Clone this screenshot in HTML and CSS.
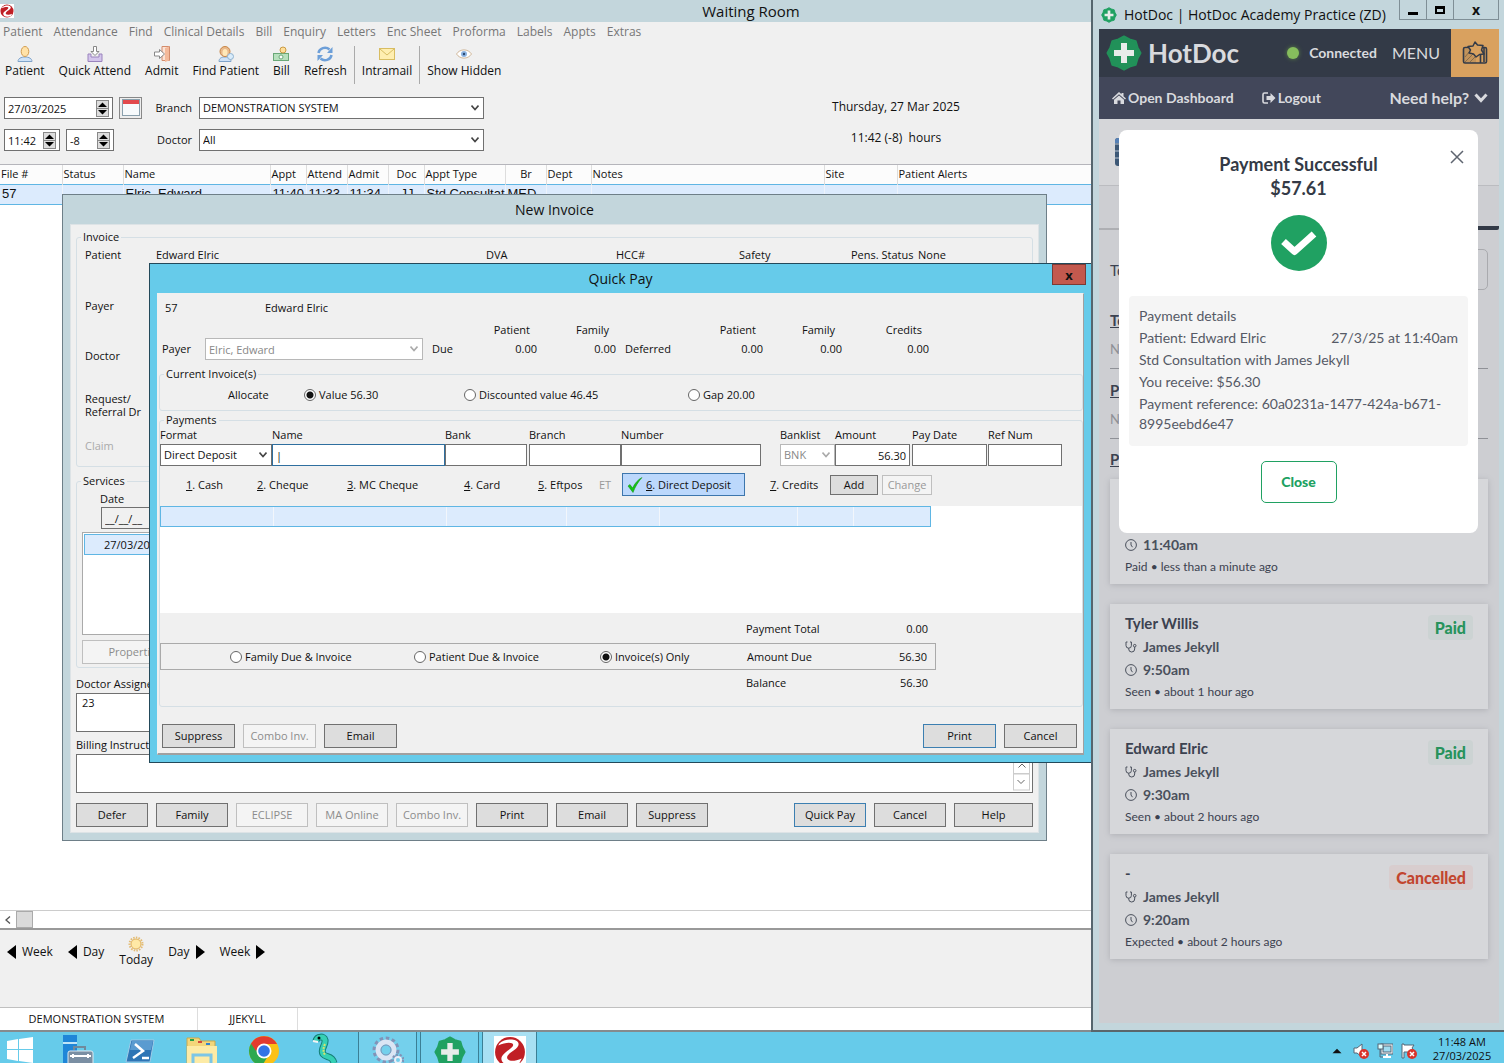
FILE: index.html
```
<!DOCTYPE html>
<html lang="en">
<head>
  <meta charset="UTF-8" />
  <title>Waiting Room</title>
  <link rel="stylesheet" href="styles.css">
</head>
<body>
  <!-- shared shapes -->
  <svg class="defs" aria-hidden="true">
    <symbol id="badge" viewBox="0 0 36 36">
      <path d="M18 1.500L23.600 4.500L29.700 6.300L31.500 12.400L34.500 18L31.500 23.600L29.700 29.700L23.600 31.500L18 34.500L12.400 31.500L6.300 29.700L4.500 23.600L1.500 18L4.500 12.400L6.300 6.300L12.400 4.500Z" fill="currentColor" stroke="currentColor" stroke-width="2" stroke-linejoin="round"/>
      <path d="M15 8h6v7h7v6h-7v7h-6v-7H8v-6h7z" fill="#e8ecea"/>
    </symbol>
    <symbol id="zed" viewBox="0 0 30 30">
      <rect width="30" height="30" fill="#fff"/>
      <circle cx="15" cy="15" r="14" fill="#c01f25"/>
      <path d="M5 7C10 2 22 2 23 7C24 12 14 15 12.500 19C11 23 17 25 26 21L24 25C18 29 8 28 7 22C6 16 18 12 18 8.500C18 5.500 11 5.500 4 9Z" fill="#fff"/>
    </symbol>
    <symbol id="steth" viewBox="0 0 12 12">
      <path d="M2.500 1H1v3.500a2.700 2.700 0 0 0 5.400 0V1H5 M3.700 7.200V8a3 3 0 0 0 6 0V6" fill="none" stroke="currentColor"/>
      <circle cx="9.700" cy="4.700" r="1.300" fill="none" stroke="currentColor"/>
    </symbol>
    <symbol id="clock" viewBox="0 0 12 12">
      <circle cx="6" cy="6" r="5.400" fill="none" stroke="currentColor"/>
      <path d="M6 3v3l1.500 2.200" fill="none" stroke="currentColor"/>
    </symbol>
  </svg>

  <main class="desktop">
    <section class="room">
      <header class="room-title">
        <svg class="room-logo"><use href="#zed"/></svg>
        <h1>Waiting Room</h1>
      </header>

      <nav class="menu">
        <button>Patient</button><button>Attendance</button><button>Find</button><button>Clinical Details</button><button>Bill</button><button>Enquiry</button><button>Letters</button><button>Enc Sheet</button><button>Proforma</button><button>Labels</button><button>Appts</button><button>Extras</button>
      </nav>

      <div class="toolbar">
        <button>
          <svg viewBox="0 0 16 16"><path d="M1 15.500c0-3 3-4.500 7-4.500s7 1.500 7 4.500z" fill="#cfe2f7" stroke="#7fa3c9"/><ellipse cx="8" cy="5.500" rx="3.800" ry="5" fill="#ffe2a8" stroke="#d19b4e"/></svg>
          Patient
        </button>
        <button>
          <svg viewBox="0 0 16 16"><path d="M1 8h3v3h8V8h3v7.500H1z" fill="#d4c5ec" stroke="#9a84bd"/><path d="M6.500 .5h3v5H12L8 9.500 4 5.500h2.500z" fill="#fff" stroke="#888"/></svg>
          Quick Attend
        </button>
        <button>
          <svg viewBox="0 0 16 16"><path d="M8 .5h7.500v14H8z" fill="#fbe3d6" stroke="#d38b6b"/><path d="M11 2l4-1.500v14L11 16z" fill="#f4b99a"/><path d="M.5 6h5V3.500l5 4.500-5 4.500V10h-5z" fill="#fff" stroke="#888"/></svg>
          Admit
        </button>
        <button>
          <svg viewBox="0 0 16 16"><path d="M1 15.500c0-3 2-4.500 6-4.500s6 1.500 6 4.500z" fill="#cfe2f7" stroke="#7fa3c9"/><ellipse cx="7" cy="5.500" rx="5" ry="5" fill="#e9b98c" stroke="#c78545"/><ellipse cx="7" cy="6.500" rx="2.500" ry="3.500" fill="#ffe8b8"/><circle cx="12.500" cy="10.500" r="3" fill="#d9ecfb" stroke="#8fb1cf"/></svg>
          Find Patient
        </button>
        <button>
          <svg viewBox="0 0 16 16"><rect x=".5" y="7.500" width="15" height="7" fill="#b7e0bd" stroke="#6aa877"/><circle cx="8" cy="11" r="2" fill="#fff" stroke="#6aa877"/><circle cx="10" cy="4" r="3" fill="#ffdf9a" stroke="#c99b45"/></svg>
          Bill
        </button>
        <button>
          <svg viewBox="0 0 16 16"><path d="M1.500 7a6.500 6 0 0 1 11-3.500M14.500 9a6.500 6 0 0 1-11 3.500" fill="none" stroke="#6d9fd8" stroke-width="2.500"/><path d="M15.500 1v6H10zM.5 15V9H6z" fill="#6d9fd8"/></svg>
          Refresh
        </button>
        <span class="divider"></span>
        <button>
          <svg viewBox="0 0 16 16"><rect x=".5" y="2.500" width="15" height="11" fill="#ffeeb0" stroke="#d8bd62"/><path d="M1 3l7 6 7-6" fill="none" stroke="#d8bd62"/></svg>
          Intramail
        </button>
        <span class="divider"></span>
        <button>
          <svg viewBox="0 0 16 16"><path d="M.5 8C4 2.500 12 2.500 15.500 8 12 13.500 4 13.500 .5 8z" fill="#fff" stroke="#d0b79a"/><circle cx="8" cy="8" r="3" fill="#8db4e2"/><circle cx="8" cy="8" r="1.200" fill="#2c4a72"/></svg>
          Show Hidden
        </button>
      </div>

      <div class="filters">
        <div class="filter-fields">
          <div class="spin-line">
            <span class="spin spin-date"><input type="text" value="27/03/2025" aria-label="Date"><i class="spin-arrows"></i></span>
            <button class="calendar" aria-label="Calendar"><svg viewBox="0 0 18 18"><rect x=".5" y=".5" width="17" height="16" fill="#f7fafc" stroke="#8aa0ad"/><path d="M1 1h16v4H1z" fill="#e2494d"/></svg></button>
          </div>
          <label for="branch">Branch</label>
          <select id="branch"><option>DEMONSTRATION SYSTEM</option></select>
          <div class="spin-line">
            <span class="spin spin-time"><input type="text" value="11:42" aria-label="Time"><i class="spin-arrows"></i></span>
            <span class="spin spin-offset"><input type="text" value="-8" aria-label="Offset"><i class="spin-arrows"></i></span>
          </div>
          <label for="doctor">Doctor</label>
          <select id="doctor"><option>All</option></select>
        </div>
        <div class="now">
          <div>Thursday, 27 Mar 2025</div>
          <div>11:42 (-8)&nbsp; hours</div>
        </div>
      </div>

      <table class="visits">
        <colgroup>
          <col class="w62"><col class="w61"><col class="w147"><col class="w36"><col class="w41"><col class="w41"><col class="w36"><col class="w81"><col class="w41"><col class="w45"><col class="w233"><col class="w73"><col>
        </colgroup>
        <thead>
          <tr><th>File #</th><th>Status</th><th>Name</th><th>Appt</th><th>Attend</th><th>Admit</th><th class="mid">Doc</th><th>Appt Type</th><th class="mid">Br</th><th>Dept</th><th>Notes</th><th>Site</th><th>Patient Alerts</th></tr>
        </thead>
        <tbody>
          <tr><td>57</td><td></td><td>Elric, Edward</td><td>11:40</td><td>11:33</td><td>11:34</td><td class="mid">JJ</td><td>Std Consultat</td><td>MED</td><td></td><td></td><td></td><td></td></tr>
        </tbody>
      </table>

      <div class="room-space"></div>
      <div class="hscroll"><button aria-label="Scroll left"></button><span class="thumb"></span></div>

      <div class="pager">
        <button><i class="tri-left"></i>Week</button>
        <button><i class="tri-left"></i>Day</button>
        <button class="today">
          <svg viewBox="0 0 16 16"><circle cx="8" cy="8" r="6.500" fill="none" stroke="#e3bb72" stroke-width="2" stroke-dasharray="1.500 1.200"/><circle cx="8" cy="8" r="5" fill="#ffe9a6" stroke="#e0b25f"/></svg>
          Today
        </button>
        <button>Day<i class="tri-right"></i></button>
        <button>Week<i class="tri-right"></i></button>
      </div>

      <footer class="statusbar"><span>DEMONSTRATION SYSTEM</span><span>JJEKYLL</span></footer>
    </section>

    <section class="dialog invoice">
      <h2>New Invoice</h2>
      <div class="dialog-body">
        <fieldset class="invoice-info">
          <legend>Invoice</legend>
          <div class="info-row"><span>Patient</span><span>Edward Elric</span><span>DVA</span><span>HCC#</span><span>Safety</span><span>Pens. Status</span><span>None</span></div>
          <div class="info-row payer">Payer</div>
          <div class="info-row short">Doctor</div>
          <div class="info-row ref">Request/<br>Referral Dr</div>
          <div class="info-row claim">Claim</div>
        </fieldset>
        <fieldset class="services">
          <legend>Services</legend>
          <label for="sdate">Date</label>
          <input id="sdate" type="text" value="__/__/__">
          <div class="service-list"><div class="service-row">27/03/20</div></div>
          <button class="btn properties" disabled>Properties</button>
        </fieldset>
        <label for="assigned">Doctor Assigned</label>
        <textarea id="assigned">23</textarea>
        <label for="billing">Billing Instructions</label>
        <div class="billing">
          <textarea id="billing"></textarea>
          <div class="vscroll"><button class="up" aria-label="Up"></button><button class="down" aria-label="Down"></button></div>
        </div>
        <div class="button-row">
          <button class="btn">Defer</button>
          <button class="btn">Family</button>
          <button class="btn" disabled>ECLIPSE</button>
          <button class="btn" disabled>MA Online</button>
          <button class="btn" disabled>Combo Inv.</button>
          <button class="btn">Print</button>
          <button class="btn">Email</button>
          <button class="btn">Suppress</button>
          <button class="btn primary push">Quick Pay</button>
          <button class="btn">Cancel</button>
          <button class="btn help">Help</button>
        </div>
      </div>
    </section>

    <section class="dialog quickpay">
      <h2>Quick Pay</h2>
      <button class="dialog-close" aria-label="Close">x</button>
      <div class="dialog-body">
        <div class="who"><span>57</span><span>Edward Elric</span></div>
        <div class="balances heads">
          <span></span><span></span><span></span><span>Patient</span><span>Family</span><span></span><span>Patient</span><span>Family</span><span>Credits</span>
        </div>
        <div class="balances">
          <label for="payer">Payer</label>
          <select id="payer" disabled><option>Elric, Edward</option></select>
          <span class="key">Due</span><span>0.00</span><span>0.00</span><span class="key">Deferred</span><span>0.00</span><span>0.00</span><span>0.00</span>
        </div>

        <fieldset class="allocate">
          <legend>Current Invoice(s)</legend>
          <div class="allocate-row">
            <span class="allocate-label">Allocate</span>
            <label><input type="radio" name="alloc" checked>Value 56.30</label>
            <label><input type="radio" name="alloc">Discounted value 46.45</label>
            <label><input type="radio" name="alloc">Gap 20.00</label>
          </div>
        </fieldset>

        <fieldset class="payments">
          <legend>Payments</legend>
          <div class="pay-grid">
            <label for="format">Format</label><label for="pname">Name</label><label for="bank">Bank</label><label for="pbranch">Branch</label><label for="number">Number</label><label for="banklist">Banklist</label><label for="amount">Amount</label><label for="paydate">Pay Date</label><label for="refnum">Ref Num</label>
            <select id="format"><option>Direct Deposit</option></select>
            <input id="pname" class="focused" type="text" value="|">
            <input id="bank" class="bank" type="text">
            <input id="pbranch" type="text">
            <input id="number" class="number" type="text">
            <select id="banklist" disabled><option>BNK</option></select>
            <input id="amount" class="amount" type="text" value="56.30">
            <input id="paydate" type="text">
            <input id="refnum" type="text">
          </div>
          <div class="formats">
            <button><u>1</u>. Cash</button>
            <button><u>2</u>. Cheque</button>
            <button><u>3</u>. MC Cheque</button>
            <button><u>4</u>. Card</button>
            <button><u>5</u>. Eftpos</button>
            <button disabled>ET</button>
            <button class="chosen"><svg viewBox="0 0 16 16"><path d="M1 9l2-1.500 2.500 3.500C8 6 11 2.500 15 .5 11 5 8 10 6 15.500z" fill="#16c416" stroke="#0b8a0b" stroke-width=".5"/></svg><u>6</u>. Direct Deposit</button>
            <button><u>7</u>. Credits</button>
            <button class="btn">Add</button>
            <button class="btn" disabled>Change</button>
          </div>
          <div class="pay-list">
            <div class="pay-line"><i></i><i></i><i></i><i></i><i></i><i></i></div>
          </div>
          <div class="total first"><span class="choices"></span><span class="total-name">Payment Total</span><span class="total-value">0.00</span></div>
          <div class="total boxed">
            <span class="choices">
              <label><input type="radio" name="due">Family Due &amp; Invoice</label>
              <label><input type="radio" name="due">Patient Due &amp; Invoice</label>
              <label><input type="radio" name="due" checked>Invoice(s) Only</label>
            </span>
            <span class="total-name">Amount Due</span><span class="total-value">56.30</span>
          </div>
          <div class="total"><span class="choices"></span><span class="total-name">Balance</span><span class="total-value">56.30</span></div>
        </fieldset>

        <div class="button-row">
          <button class="btn">Suppress</button>
          <button class="btn" disabled>Combo Inv.</button>
          <button class="btn">Email</button>
          <button class="btn primary push">Print</button>
          <button class="btn">Cancel</button>
        </div>
      </div>
    </section>

    <section class="hotdoc">
      <header class="hd-title">
        <svg class="hd-mini"><use href="#badge"/></svg>
        <span>HotDoc | HotDoc Academy Practice (ZD)</span>
        <div class="hd-controls">
          <button aria-label="Minimise"><svg viewBox="0 0 12 12"><path d="M1 8h10v3H1z"/></svg></button>
          <button aria-label="Maximise"><svg viewBox="0 0 12 12"><path d="M1 2h10v8H1z M3 5v3h6V5z" fill-rule="evenodd"/></svg></button>
          <button aria-label="Close">x</button>
        </div>
      </header>
      <div class="hd-app">
        <div class="hd-bar">
          <svg class="hd-logo"><use href="#badge"/></svg>
          <strong>HotDoc</strong>
          <span class="dot"></span>
          <span class="connected">Connected</span>
          <button class="hd-menu">MENU</button>
          <button class="hd-map" aria-label="Layout">
            <svg viewBox="0 0 26 26"><path d="M2 9h7v6l5 3v5H2z" fill="#c2935b"/><path d="M3 17l5-6M3 22l8-8M8 22l5-5" stroke="#8a6c49"/><path d="M7.500 7.500H3Q1.500 7.500 1.500 9v12.500Q1.500 23 3 23h20q1.500 0 1.500-1.500V9q0-1.500-1.500-1.500h-3M18.500 23V14M22 8v14" fill="none" stroke="#333a47" stroke-width="1.600"/><path d="M13 2l2.500 3 5.500.500-1.500 4.500 2.500 4-4.500.500L14 17l-2.500-3L7 13l1.500-3L6 6.500l5-.500z" fill="#d9a15f" stroke="#333a47" stroke-width="1.500" stroke-linejoin="round"/></svg>
          </button>
        </div>
        <nav class="hd-nav">
          <a href="#"><svg viewBox="0 0 14 12"><path d="M7 0l2.500 2.300V1h2v3.200L14 6.500l-1 1L7 2.200 1 7.500l-1-1zM7 3.500l5 4.300V12H8.500V8.500h-3V12H2V7.800z" fill="currentColor"/></svg>Open Dashboard</a>
          <a href="#"><svg viewBox="0 0 14 12"><path d="M6 1H2.500Q1 1 1 2.500v7Q1 11 2.500 11H6" fill="none" stroke="currentColor" stroke-width="1.600"/><path d="M4.500 4h4V1l5 5-5 5V8h-4z" fill="currentColor"/></svg>Logout</a>
          <button>Need help?<svg viewBox="0 0 14 10"><path d="M1.500 1.500L7 7.500l5.500-6" fill="none" stroke="currentColor" stroke-width="3"/></svg></button>
        </nav>
        <div class="hd-summary"><svg viewBox="0 0 28 28"><rect width="28" height="28" rx="3" fill="#3d5876"/><path d="M0 3q0-3 3-3h22q3 0 3 3v2H0z" fill="#5680b5"/><path d="M0 6h28M0 13h28M0 20h28" stroke="#b8c2cf"/></svg></div>
        <div class="hd-tabs"><span></span><span class="on"></span></div>
        <div class="hd-content">
          <div class="hd-select"><span>To</span><span class="hd-box"></span></div>
          <div class="hd-group"><h3>To</h3><p>N</p></div>
          <div class="hd-group"><h3>P</h3><p>N</p></div>
          <div class="hd-group last"><h3>P</h3></div>
          <article class="card under">
            <p class="line"><svg><use href="#clock"/></svg>11:40am</p>
            <p class="foot">Paid • less than a minute ago</p>
          </article>
          <article class="card">
            <h4>Tyler Willis</h4><span class="tag">Paid</span>
            <p class="line"><svg><use href="#steth"/></svg>James Jekyll</p>
            <p class="line"><svg><use href="#clock"/></svg>9:50am</p>
            <p class="foot">Seen • about 1 hour ago</p>
          </article>
          <article class="card">
            <h4>Edward Elric</h4><span class="tag">Paid</span>
            <p class="line"><svg><use href="#steth"/></svg>James Jekyll</p>
            <p class="line"><svg><use href="#clock"/></svg>9:30am</p>
            <p class="foot">Seen • about 2 hours ago</p>
          </article>
          <article class="card">
            <h4>-</h4><span class="tag red">Cancelled</span>
            <p class="line"><svg><use href="#steth"/></svg>James Jekyll</p>
            <p class="line"><svg><use href="#clock"/></svg>9:20am</p>
            <p class="foot">Expected • about 2 hours ago</p>
          </article>
        </div>

        <div class="modal">
          <button class="modal-x" aria-label="Close"><svg viewBox="0 0 14 14"><path d="M1 1l12 12M13 1L1 13" stroke="#5f6570" stroke-width="1.500"/></svg></button>
          <h2>Payment Successful<br>$57.61</h2>
          <svg class="tick" viewBox="0 0 56 56"><circle cx="28" cy="28" r="28" fill="#20a162"/><path d="M12.500 26.500l11 10L43 19" fill="none" stroke="#fff" stroke-width="7" stroke-linejoin="round"/></svg>
          <div class="details">
            <p>Payment details</p>
            <p class="split"><span>Patient: Edward Elric</span><span>27/3/25 at 11:40am</span></p>
            <p>Std Consultation with James Jekyll</p>
            <p>You receive: $56.30</p>
            <p class="reference">Payment reference: 60a0231a-1477-424a-b671-8995eebd6e47</p>
          </div>
          <button class="modal-close">Close</button>
        </div>
      </div>
    </section>
  </main>

  <footer class="taskbar">
    <div class="apps">
      <button aria-label="Start"><svg viewBox="0 0 32 32"><path d="M2 9l11-2v10H2zM14 7l14-2v12H14zM2 18h11v11L2 27zM14 18h14v13l-14-2z" fill="#fff"/></svg></button>
      <button aria-label="Server Manager"><svg viewBox="0 0 32 32"><path d="M1 3h14v29H1z" fill="#1f86d8"/><path d="M1 10h14v2H1z" fill="#bfe4f7"/><path d="M12 18v-3h11v3" fill="none" stroke="#708a9c" stroke-width="2"/><rect x="6" y="19" width="25" height="16" rx="2" fill="#7a8fa3" stroke="#dceaf2"/><path d="M8 24h21M11 22v4M26 22v4" stroke="#fff" stroke-width="2"/></svg></button>
      <button aria-label="PowerShell"><svg viewBox="0 0 32 32"><path d="M7 8h23l-4 22H2z" fill="#2e75b5" stroke="#9fcbe8"/><path d="M8 9h21l-2 9H6z" fill="#5a9bd0"/><path d="M11 12l8 7-10 7M18 26h7" fill="none" stroke="#fff" stroke-width="2.500"/></svg></button>
      <button aria-label="Explorer"><svg viewBox="0 0 32 32"><path d="M1 6h12l2 3h14v23H1z" fill="#f3d67a" stroke="#c9a84c"/><path d="M4 7h4v2H4z" fill="#27a243"/><path d="M12 9h4v2h-4z" fill="#d34a3a"/><path d="M20 11h4v2h-4z" fill="#2f83d0"/><path d="M1 14h30v18H1z" fill="#fdeba6"/><path d="M7 32V23h18v9" fill="none" stroke="#7cc6e6" stroke-width="3"/></svg></button>
      <button aria-label="Chrome"><svg viewBox="0 0 32 32"><circle cx="16" cy="19" r="15" fill="#fbc116"/><path d="M16 19L3 11.500a15 15 0 0 0 11 22.400l6-10z" fill="#2da94f"/><path d="M3 11.500a15 15 0 0 1 26 .5H14l-6 7z" fill="#e33b2e"/><circle cx="16" cy="19" r="7.500" fill="#fff"/><circle cx="16" cy="19" r="5.800" fill="#3273e6"/></svg></button>
      <button aria-label="Viper"><svg viewBox="0 0 32 32"><path d="M6 9C7 4 14 4 15 8c1 5-5 9-2 14 3 4 9 1 11 9" fill="none" stroke="#157f77" stroke-width="7"/><path d="M6 9C7 4 14 4 15 8c1 5-5 9-2 14 3 4 9 1 11 9" fill="none" stroke="#35d0b4" stroke-width="5"/><path d="M15 12q-3 6 0 11" fill="none" stroke="#d7e26b" stroke-width="2" stroke-dasharray="2 1"/><path d="M3 9l5 1" stroke="#f4f4f4" stroke-width="2"/><circle cx="9" cy="6" r="1.500"/></svg></button>
      <button class="open" aria-label="Settings"><svg viewBox="0 0 32 32"><circle cx="14" cy="14" r="11" fill="none" stroke="#8094b8" stroke-width="5" stroke-dasharray="3.200 2.500"/><circle cx="14" cy="14" r="8" fill="none" stroke="#dbe5f4" stroke-width="5" /><circle cx="14" cy="14" r="5" fill="none" stroke="#8094b8"/><circle cx="26" cy="24" r="5" fill="none" stroke="#8094b8" stroke-width="3" stroke-dasharray="2 1.500"/><circle cx="26" cy="24" r="3" fill="none" stroke="#e8eef8" stroke-width="2"/></svg></button>
      <button class="open green" aria-label="HotDoc"><svg><use href="#badge"/></svg></button>
      <button class="open active" aria-label="Zedmed"><svg><use href="#zed"/></svg></button>
    </div>
    <div class="tray">
      <svg viewBox="0 0 10 16"><path d="M1 10l4-4 4 4z" fill="#111"/></svg>
      <svg viewBox="0 0 16 16"><path d="M1 5h3l5-4v13l-5-4H1z" fill="#fff" stroke="#567"/><circle cx="11" cy="11" r="5" fill="#d9342b"/><path d="M9 9l4 4M13 9l-4 4" stroke="#fff" stroke-width="1.500"/></svg>
      <svg viewBox="0 0 16 16"><rect x="5" y="2" width="10" height="8" fill="#9fdcf0" stroke="#567" stroke-width="3"/><rect x="5" y="2" width="10" height="8" fill="none" stroke="#fff"/><path d="M10 11v3M6 14h8" stroke="#fff" stroke-width="2"/><rect x="1" y="1" width="5" height="5" fill="#dff" stroke="#567"/><path d="M3 6v8h3" fill="none" stroke="#567"/></svg>
      <svg viewBox="0 0 16 16"><path d="M1 1v14h2V9h11l-3-4 2-3H3V1z" fill="#fff" stroke="#567"/><circle cx="11" cy="11" r="5" fill="#d9342b"/><path d="M9 9l4 4M13 9l-4 4" stroke="#fff" stroke-width="1.500"/></svg>
      <div class="time">11:48 AM<br>27/03/2025</div>
    </div>
  </footer>
</body>
</html>
```
FILE: styles.css
```
* { box-sizing: border-box; }
body {
  margin: 0; height: 100vh; overflow: hidden;
  display: flex; flex-direction: column;
  font-family: "Open Sans", "Noto Sans", sans-serif;
  font-size: 11px; line-height: 14px; color: #111;
  background: #66cbea;
}
h1, h2, h3, h4, p { margin: 0; font-weight: normal; }
button, input, select, textarea { font: inherit; color: inherit; margin: 0; border-radius: 0; }
button { padding: 0; border: none; background: none; white-space: nowrap; }
fieldset { margin: 0; padding: 0; border: 1px solid #d5dfe5; border-radius: 3px; min-width: 0; }
legend { padding: 0 2px; margin-left: 4px; line-height: 14px; }
label { display: block; white-space: nowrap; }
svg { display: block; flex: none; }
.defs { position: absolute; width: 0; height: 0; }
input[type=text], select, textarea {
  width: 100%; height: 22px; padding: 0 3px;
  background: #fff; border: 1px solid #707070; outline: none; resize: none;
}
select {
  appearance: none;
  background: #fff url("data:image/svg+xml,%3Csvg xmlns='http://www.w3.org/2000/svg' width='8' height='6'%3E%3Cpath d='M0.500 0.500L4 4.500L7.500 0.500' fill='none' stroke='%23444' stroke-width='1.600'/%3E%3C/svg%3E") no-repeat right 4px center;
}
select:disabled {
  color: #888; border-color: #b8b8b8; opacity: 1;
  background-image: url("data:image/svg+xml,%3Csvg xmlns='http://www.w3.org/2000/svg' width='8' height='6'%3E%3Cpath d='M0.500 0.500L4 4.500L7.500 0.500' fill='none' stroke='%23aaa' stroke-width='1.600'/%3E%3C/svg%3E");
}
input[type=radio] {
  appearance: none; width: 12px; height: 12px; margin: 0;
  border: 1px solid #666; border-radius: 50%; background: #fff;
}
input[type=radio]:checked { background: radial-gradient(circle, #111 0 3px, #fff 4px); }

.desktop { flex: 1; min-height: 0; position: relative; overflow: hidden; }

/* waiting room */
.room { height: 100%; display: flex; flex-direction: column; background: #f0f0f0; }
.room-title { display: flex; height: 22px; background: #c3d6dc; align-items: center; }
.room-title h1 { flex: 1; text-align: center; font-size: 15px; line-height: 20px; padding-right: 16px; }
.room-logo { width: 14px; height: 14px; }
.menu { display: flex; height: 20px; padding-left: 3px; gap: 11px; color: #777; }
.menu button, .toolbar button, .pager button { font-size: 12px; }
.toolbar { display: flex; height: 42px; padding: 4px 5px; gap: 14px; }
.toolbar button { display: flex; flex-direction: column; align-items: center; gap: 2px; }
.toolbar svg { width: 16px; height: 16px; }
.divider { width: 1px; height: 38px; background: #aaa; margin: 0 -7px; }
.filters { display: flex; height: 81px; padding: 13px 0 0 4px; border-bottom: 1px solid #b5b5bb; }
.filter-fields { display: grid; grid-template-columns: 138px 51px 285px; grid-auto-rows: 22px; row-gap: 10px; column-gap: 3px; align-content: start; }
.filter-fields label { text-align: right; padding-right: 4px; line-height: 22px; }
.spin-line { display: flex; gap: 6px; }
.spin { display: flex; align-items: center; background: #fff; border: 1px solid #707070; padding-right: 3px; }
.spin input[type=text] { border: none; height: 18px; min-width: 0; background: none; }
.spin-date { width: 109px; }
.spin-time { width: 56px; }
.spin-offset { width: 48px; }
.spin-arrows { flex: none; width: 13px; height: 17px; border: 1px solid #888; background: url("data:image/svg+xml,%3Csvg xmlns='http://www.w3.org/2000/svg' width='11' height='15'%3E%3Crect width='11' height='15' fill='%23ddd'/%3E%3Cpath d='M1 6L5.500 1.500L10 6zM1 9L5.500 13.500L10 9z'/%3E%3Cpath d='M0 7.500h11' stroke='%23888'/%3E%3C/svg%3E"); }
.calendar { width: 23px; height: 22px; border: 1px solid #888; display: grid; place-items: center; background: #eee; }
.calendar svg { width: 18px; height: 18px; }
.now { margin-left: 278px; width: 268px; text-align: center; font-size: 12px; line-height: 20px; display: grid; row-gap: 11px; align-content: start; }

.visits { width: 100%; table-layout: fixed; border-collapse: collapse; background: #fff; }
.visits th { height: 19px; padding: 0 0 0 1px; text-align: left; font-weight: normal; background: #fcfcfc; border-right: 1px solid #ddd; white-space: nowrap; }
.visits td { height: 20px; padding: 0 0 0 2px; font: 13px/16px "Liberation Sans", sans-serif; background: #dcebfd; border-right: 1px solid #edf3fb; border-top: 1px solid #5fb6e4; border-bottom: 1px solid #5fb6e4; white-space: nowrap; overflow: hidden; }
.visits .mid { text-align: center; }
.w36 { width: 36px; } .w41 { width: 41px; } .w45 { width: 45px; } .w61 { width: 61px; } .w62 { width: 62px; }
.w73 { width: 73px; } .w81 { width: 81px; } .w147 { width: 147px; } .w233 { width: 233px; }
.room-space { flex: 1; background: #fff; }
.hscroll { display: flex; height: 20px; background: #fff; border-top: 1px solid #ccc; border-bottom: 2px solid #999; }
.hscroll button { width: 16px; background: url("data:image/svg+xml,%3Csvg xmlns='http://www.w3.org/2000/svg' width='6' height='8'%3E%3Cpath d='M5 0.500L1 4l4 3.500' fill='none' stroke='%23555' stroke-width='1.300'/%3E%3C/svg%3E") no-repeat center; }
.thumb { width: 17px; background: #dadada; border: 1px solid #aaa; }
.pager { display: flex; height: 77px; padding: 6px 7px 0; gap: 15px; align-items: flex-start; }
.pager button { display: flex; align-items: center; gap: 6px; height: 32px; }
.pager .today { flex-direction: column; gap: 1px; }
.today svg { width: 16px; height: 16px; }
.tri-left { border: 7px solid transparent; border-left: none; border-right: 9px solid #000; }
.tri-right { border: 7px solid transparent; border-right: none; border-left: 9px solid #000; }
.statusbar { display: flex; height: 25px; background: #fff; border-top: 1px solid #c0c0c0; border-bottom: 2px solid #858b8e; line-height: 22px; }
.statusbar span { width: 100px; text-align: center; border-right: 1px solid #ddd; }
.statusbar span:first-child { width: 198px; padding-right: 4px; }

/* dialogs */
.dialog { position: absolute; border: 1px solid #6e7f88; background: #c3d6dc; padding: 0 7px 7px; }
.dialog h2 { height: 29px; line-height: 29px; font-size: 14px; text-align: center; }
.dialog-body { background: #f0f0f0; border: 1px solid #dde3e6; }
.btn { width: 73px; height: 24px; border: 1px solid #707070; background: #ddd; text-align: center; }
.btn:disabled { background: #f4f4f4; border-color: #bfbfbf; color: #8c8c8c; }
.btn.primary { border-color: #3c7fb1; }
.button-row { display: flex; gap: 8px; }
.push { margin-left: auto; }

.invoice { left: 62px; right: 457px; top: 194px; }
.invoice .dialog-body { padding: 5px 5px 5px; }
.info-row { display: grid; grid-template-columns: 71px 330px 130px 123px 112px 67px 1fr; height: 51px; white-space: nowrap; }
.invoice-info { padding: 4px 0 0 8px; }
.invoice-info legend { margin-left: -4px; }
.info-row.payer { height: 50px; }
.info-row.short { height: 43px; }
.info-row.ref { height: 47px; line-height: 13px; }
.info-row.claim { height: 27px; color: #aaa; }
.services { margin: 7px 0 9px; padding: 4px 5px 3px; }
.services legend { margin-left: -1px; }
.services label { padding-left: 18px; height: 15px; }
.services input[type=text] { margin-left: 19px; width: 120px; background: #f0f0f0; }
.service-list { margin-top: 3px; height: 103px; border: 1px solid #aaa; background: #fff; padding: 1px; }
.service-row { height: 21px; line-height: 19px; padding-left: 19px; background: #dcebfd; border: 1px solid #5fb6e4; }
.properties { display: block; margin: 5px 0 0; width: 106px; }
#assigned { display: block; height: 39px; margin: 2px 0 6px; padding: 2px 5px; }
.billing { display: flex; height: 39px; border: 1px solid #707070; margin: 2px 0 10px; background: #fff; padding: 2px; }
.billing textarea { border: none; height: auto; }
.vscroll { display: flex; flex-direction: column; }
.vscroll button { width: 17px; flex: 1; border: 1px solid #ccc; }
.up, .down { background: url("data:image/svg+xml,%3Csvg xmlns='http://www.w3.org/2000/svg' width='8' height='5'%3E%3Cpath d='M0.500 4.500L4 1l3.500 3.500' fill='none' stroke='%23666'/%3E%3C/svg%3E") no-repeat center; }
.down { transform: rotate(180deg); }
.invoice .button-row .btn { width: 72px; }
.invoice .button-row .help { width: 79px; }

.quickpay { left: 149px; right: 412px; top: 263px; background: #66cbea; border-color: #23495a; }
.quickpay .dialog-body { border: 1px solid #f0f0f0; border-right-color: #a0a0a0; border-bottom: 2px solid #a0a0a0; padding: 7px 0 5px 1px; }
.dialog-close { position: absolute; top: 0; right: 5px; width: 34px; height: 21px; background: #c3594e; border: 1px solid #7b3a35; font-weight: bold; font-size: 13px; line-height: 16px; }
.who { display: grid; grid-template-columns: 100px 1fr; padding-left: 6px; height: 22px; }
.balances { display: grid; grid-template-columns: 43px 218px 54px 60px 79px 67px 80px 79px 87px; padding-left: 3px; text-align: right; line-height: 22px; margin-bottom: 7px; }
.balances.heads { line-height: 14px; margin-bottom: 1px; }
.heads span { padding-right: 7px; }
.balances label { text-align: left; }
.balances .key { text-align: left; padding-left: 9px; }
.allocate { height: 44px; }
.allocate-row { display: grid; grid-template-columns: 76px 160px 224px 1fr; padding: 7px 0 0 68px; }
.allocate-row label, .choices label { display: flex; align-items: center; gap: 3px; }
.payments { margin-top: 2px; padding: 1px 0 10px; }
.pay-grid { display: grid; grid-template-columns: 112px 173px 84px 92px 159px 55px 77px 76px 74px; row-gap: 2px; }
.pay-grid .bank { width: 82px; }
.pay-grid .number { width: 140px; }
.pay-grid .focused { border-color: #2f6f9f; }
.pay-grid .amount { text-align: right; }
.pay-grid #amount, .pay-grid #paydate { width: 75px; }
.formats { display: grid; grid-template-columns: 71px 90px 117px 74px 61px 23px 148px 60px 52px 50px; padding: 7px 0 10px 26px; align-items: center; }
.formats button { text-align: left; }
.formats button:disabled { color: #999; }
.formats .chosen { display: flex; align-items: center; width: 123px; height: 23px; padding-left: 4px; background: #bcd8fc; border: 1px solid #3d76ad; }
.chosen svg { width: 16px; height: 16px; margin-right: 3px; }
.formats .btn { text-align: center; width: 48px; height: 20px; }
.formats .btn:disabled { width: 50px; }
.pay-list { height: 107px; background: #fff; }
.pay-line { display: grid; grid-template-columns: 113px 173px 120px 93px 138px 56px; width: 771px; height: 21px; background: #dcebfd; border: 1px solid #5fb6e4; }
.pay-line i { border-right: 1px solid #f2f6fc; }
.total { display: grid; grid-template-columns: 586px 1fr 90px; width: 776px; height: 26px; line-height: 26px; align-items: center; }
.total.first { height: 30px; line-height: 32px; }
.total.boxed { border: 1px solid #aaa; height: 27px; }
.total-value { text-align: right; padding-right: 8px; }
.choices { display: grid; grid-template-columns: 184px 186px 1fr; padding-left: 69px; }
.quickpay .button-row { padding: 17px 6px 0 3px; }

/* hotdoc */
.hotdoc { position: absolute; top: 0; right: 0; bottom: 0; width: 413px; display: flex; flex-direction: column; background: #c3d6dc; border-left: 2px solid #55666e; border-bottom: 2px solid #5a666b; padding: 0 5px 7px 6px; }
.hd-title { display: flex; align-items: center; height: 29px; font-size: 14px; white-space: nowrap; }
.hd-mini { width: 16px; height: 16px; margin: 0 7px 0 2px; color: #20a162; }
.hd-controls { display: flex; margin-left: auto; height: 20px; align-self: flex-start; border: 1px solid #7f8f96; border-top: none; }
.hd-controls button { width: 27px; display: grid; place-items: center; border-right: 1px solid #7f8f96; font-weight: bold; font-size: 14px; }
.hd-controls button:last-child { width: 44px; border: none; }
.hd-controls svg { width: 12px; height: 12px; }
.hd-app { flex: 1; min-height: 0; position: relative; background: #cdced2; font-family: Lato, sans-serif; color: #3c4250; overflow: hidden; }
.hd-bar { display: flex; align-items: center; height: 48px; background: #333a47; color: #d9dade; padding-left: 7px; }
.hd-logo { width: 36px; height: 36px; color: #219159; }
.hd-bar strong { font-size: 26px; line-height: 32px; margin-left: 6px; }
.dot { width: 12px; height: 12px; border-radius: 50%; background: #86bd5d; margin-left: auto; box-shadow: 0 0 4px #5c8447; }
.connected { font-size: 14px; font-weight: bold; margin: 0 15px 0 10px; }
.hd-menu { font-size: 16px; }
.hd-map { width: 48px; height: 48px; background: #d9a15f; margin-left: 11px; display: grid; place-items: center; }
.hd-map svg { width: 26px; height: 26px; }
.hd-nav { display: flex; align-items: center; height: 42px; padding: 0 11px 0 13px; gap: 28px; background: #42475a; color: #d9dade; font-size: 14px; }
.hd-nav a { display: flex; align-items: center; gap: 2px; color: inherit; text-decoration: none; font-weight: bold; }
.hd-nav a svg { width: 14px; height: 12px; }
.hd-nav button { display: flex; align-items: center; gap: 5px; margin-left: auto; font-size: 16px; font-weight: bold; }
.hd-nav button svg { width: 14px; height: 10px; }
.hd-summary { height: 67px; background: #d5d6d9; border-bottom: 1px solid #bbbcc0; padding: 19px 16px; }
.hd-summary svg { width: 28px; height: 28px; }
.hd-tabs { display: flex; height: 44px; }
.hd-tabs span { flex: 1; border-bottom: 2px solid #aeafb3; }
.hd-tabs .on { border-bottom: 4px solid #333a47; border-radius: 2px; }
.hd-content { padding: 19px 11px; }
.hd-select { display: flex; justify-content: space-between; align-items: center; font-size: 15px; height: 41px; }
.hd-box { width: 200px; height: 41px; border: 1px solid #a9aaae; border-radius: 5px; }
.hd-group { height: 69px; padding-top: 10px; }
.hd-group:nth-child(2) { height: 80px; padding-top: 20px; }
.hd-group h3 { font-size: 15px; font-weight: bold; line-height: 20px; text-decoration: underline; }
.hd-group p { font-size: 13px; line-height: 38px; color: #8f9197; border-bottom: 1px solid #8f9197; height: 39px; }
.hd-group.last { height: 40px; }
.card { position: relative; height: 105px; margin-bottom: 20px; padding: 9px 15px; background: #d6d7da; box-shadow: 0 1px 6px #aeafb5; }
.card h4 { font-size: 15px; line-height: 20px; font-weight: bold; margin-bottom: 2px; }
.card .line { display: flex; align-items: center; gap: 6px; font-size: 14px; font-weight: bold; line-height: 23px; color: #4a505c; }
.card .line svg { width: 12px; height: 12px; }
.card .foot { font-size: 12px; line-height: 22px; }
.card.under { padding-top: 54px; }
.tag { position: absolute; top: 11px; right: 15px; padding: 0 7px; height: 25px; border-radius: 4px; font-size: 16px; line-height: 25px; font-weight: 900; color: #27935c; background: #ccd3d3; }
.tag.red { color: #c2452f; background: #d8cdce; }
.modal { position: absolute; top: 101px; left: 20px; right: 21px; padding: 22px 10px 30px; background: #fff; border-radius: 8px; display: flex; flex-direction: column; align-items: center; }
.modal h2 { font-size: 18px; line-height: 24px; font-weight: bold; text-align: center; color: #343a46; }
.modal-x { position: absolute; top: 20px; right: 14px; }
.modal-x svg { width: 14px; height: 14px; }
.tick { width: 56px; height: 56px; margin: 15px 0 25px; }
.details { width: 100%; height: 150px; padding: 10px; background: #f5f5f5; border-radius: 4px; font-size: 14px; line-height: 20px; color: #555a66; }
.details p { margin-bottom: 2px; }
.split { display: flex; justify-content: space-between; }
.modal-close { width: 76px; height: 42px; margin-top: 15px; border: 1px solid #20a162; border-radius: 5px; color: #20a162; font-size: 14px; font-weight: 900; }

/* taskbar */
.taskbar { display: flex; justify-content: space-between; height: 31px; overflow: hidden; background: #66cbea; }
.apps { display: flex; padding-left: 5px; }
.apps button { width: 62px; height: 42px; display: flex; align-items: flex-start; }
.apps button:first-child { width: 57px; }
.apps svg { width: 32px; height: 32px; }
.apps .open { width: 59px; margin-right: 3px; justify-content: center; border-left: 1px solid #3b7f95; border-right: 1px solid #3b7f95; padding-top: 4px; background: #74d0ec; }
.apps .green { color: #20a162; }
.apps .active { width: 55px; background: #a8e0f3; }
.apps .open:nth-child(7) { margin-left: -14px; }
.tray { display: flex; align-items: flex-start; gap: 8px; padding: 10px 12px 0 0; }
.tray svg { width: 16px; height: 18px; }
.tray .time { width: 60px; margin: -7px 0 0 7px; text-align: center; line-height: 14px; }
```
